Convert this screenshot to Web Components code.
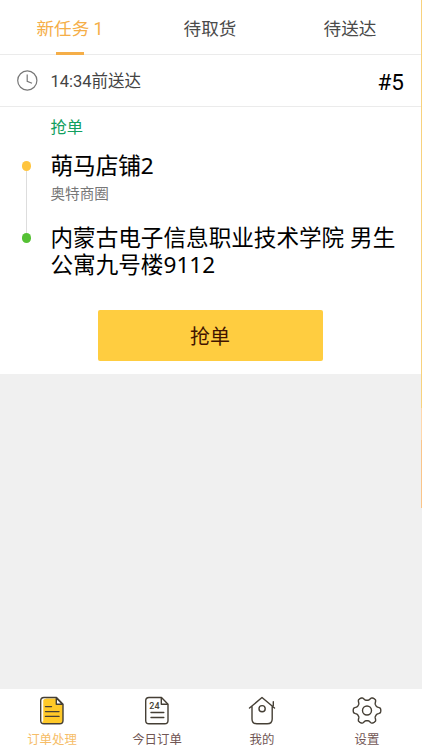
<!DOCTYPE html>
<html lang="zh-CN">
<head>
<meta charset="utf-8">
<title>订单处理</title>
<style>
html,body{margin:0;height:100%}
body{font-family:Roboto,"Noto Sans CJK SC",sans-serif;background:#f0f0f0;overflow:hidden}
</style>
</head>
<body>
<rider-app></rider-app>
<script>
const define=(name,html)=>customElements.define(name,class extends HTMLElement{
  constructor(){
    super();
    const t=document.createElement('template');
    t.innerHTML=html;
    this.attachShadow({mode:'open'}).append(t.content.cloneNode(true));
  }
});

define('task-tab',`<style>
:host{flex:1;display:flex;flex-direction:column;align-items:center;height:55px;color:#4a4a4a;font-size:17.6px;line-height:26px;white-space:pre}
span{padding-top:16px;height:36px}
i{width:28px;height:3px;background:transparent}
:host([active]){color:#f5ae48}
:host([active]) i{background:#f5ae48}
</style><span><slot></slot></span><i></i>`);

define('deadline-row',`<style>
:host{display:flex;align-items:center;height:51px;border-bottom:1px solid #ebebeb;padding:0 18px 0 17px;color:#444;font-size:16.5px}
svg{width:22px;height:22px;margin:0 12.5px 0 -1px}
span{flex:1;line-height:24px;padding-top:2px}
b{font-weight:400;font-size:22.5px;color:#000;padding-top:2px}
</style>
<svg viewBox="0 0 22 22" fill="none" stroke="#777" stroke-width="1.2"><circle cx="11.3" cy="10.5" r="9.6"/><path d="M11.2 4.500v6.8l4.8 2"/></svg>
<span><slot></slot></span><b><slot name="number"></slot></b>`);

define('route-stop',`<style>
:host{display:grid;grid-template-columns:10px 1fr;column-gap:19px}
.rail{display:flex;flex-direction:column;align-items:center;padding-top:9px}
.dot{width:9.5px;height:9.5px;border-radius:50%;background:var(--dot);flex:none}
.line{width:1px;flex:1;background:#ddd;margin-bottom:-9px;display:none}
:host([linked]) .line{display:block}
.name{font-family:"Noto Sans","Noto Sans CJK SC",sans-serif;font-size:22.6px;line-height:27px;color:#000;-webkit-text-stroke:var(--ink,0) #000}
.sub{font-size:14.6px;line-height:20px;color:#777;margin-top:5px}
</style><div class="rail"><div class="dot"></div><div class="line"></div></div>
<div><div class="name"><slot></slot></div><div class="sub"><slot name="area"></slot></div></div>`);

define('grab-button',`<style>
:host{display:block}
button{display:block;width:225px;height:51px;border:0;border-radius:2px;padding:3px 0 0;background:#ffcd40;color:#421400;font:20px/48px Roboto,"Noto Sans CJK SC",sans-serif}
</style><button><slot></slot></button>`);

define('order-card',`<style>
:host{display:block;background:#fff;height:319px}
.body{padding:10px 18px 0 21.5px}
.status{color:#12a060;font-size:16.3px;line-height:22px;padding-left:29px}
.shop{--dot:#ffc53f;--ink:.15px;margin-top:13px;height:72px}
.dest{--dot:#55c134;height:54px}
grab-button{margin:32px 0 0 76px}
</style>
<deadline-row>14:34前送达<span slot="number">#5</span></deadline-row>
<div class="body">
<div class="status">抢单</div>
<route-stop class="shop" linked>萌马店铺2<span slot="area">奥特商圈</span></route-stop>
<route-stop class="dest">内蒙古电子信息职业技术学院 男生公寓九号楼9112</route-stop>
<grab-button>抢单</grab-button>
</div>`);

define('nav-item',`<style>
:host{width:105px;display:flex;flex-direction:column;align-items:center;color:#715654;font-size:12.4px;line-height:18px}
:host([active]){color:#f6bd68}
::slotted(svg){width:32px;height:32px;fill:none;stroke:#453f35;stroke-width:1.4;stroke-linejoin:round;stroke-linecap:round}
div{height:32px;margin:6px 0 4px}
</style><div><slot name="icon"></slot></div><span><slot></slot></span>`);

define('bottom-nav',`<style>
:host{display:flex;height:61px;background:#fff}
nav-item:first-of-type{margin-left:-.5px}
</style>
<nav-item active><svg slot="icon" viewBox="0 0 32 32"><path d="M7.5 3.5H20l7 6.5v16q0 3-3 3H10q-4 0-4-3V6q0-2.500 2-2.500z" fill="#ffc928" stroke="none"/><path d="M6.500 26V5q1-2 3-2" stroke="#fff" stroke-width="1.500"/><path d="M8 2.500H20.500L27 9.200V25.500q0 3.300-3.300 3.300H8q-3.300 0-3.300-3.300V5.800Q4.700 2.500 8 2.500z"/><path d="M20.300 3v6.200H26.500z" fill="#fff"/><path d="M9.500 11.600h6M9.500 16.600H23M9.500 21.400H23"/></svg>订单处理</nav-item>
<nav-item><svg slot="icon" viewBox="0 0 32 32"><path d="M8 2.500H20.500L27 9.200V25.500q0 3.300-3.300 3.300H8q-3.300 0-3.300-3.300V5.800Q4.700 2.500 8 2.500z"/><path d="M20.300 3v6.200H26.500M10 17.500h12.800M10 22.500h12.800"/><text x="8.200" y="14.300" font-family="Roboto" font-weight="500" font-size="9" textLength="10.500" fill="#453f35" stroke="none">24</text></svg>今日订单</nav-item>
<nav-item><svg slot="icon" viewBox="0 0 32 32"><path d="M3.500 13L16 2.500 28.500 13M6 11v13q0 4.800 4.800 4.800h10.400q5 0 5-4.800V11M27.300 6.800v3.800"/><circle cx="16.100" cy="13.700" r="3.100"/></svg>我的</nav-item>
<nav-item><svg slot="icon" viewBox="0 0 32 32"><path id="gear"/><circle cx="16" cy="15.500" r="4.500"/></svg>设置</nav-item>`);

define('rider-app',`<style>
:host{display:flex;flex-direction:column;height:750px;width:422px;position:relative}
.tabs{display:flex;background:linear-gradient(#ebebeb,#ebebeb) 0 54px/100% 1px no-repeat #fff;padding-right:2px;height:55px}
main{flex:1}
.edge{position:absolute;left:421px;top:0;width:1px;height:508px;display:flex;flex-direction:column}
.edge i{background:#f8d27e;height:408px}
.edge i+i{background:#ffd8ac;height:32px}
.edge i+i+i{background:#fac58a;height:68px}
</style>
<div class="tabs"><task-tab active>新任务 1</task-tab><task-tab>待取货</task-tab><task-tab>待送达</task-tab></div>
<main><order-card></order-card></main>
<bottom-nav></bottom-nav>
<div class="edge"><i></i><i></i><i></i></div>`);

/* Six-lobed gear outline: the radius swells towards each tooth. */
const nav=document.querySelector('rider-app').shadowRoot.querySelector('bottom-nav').shadowRoot;
let d='';
for(let a=0;a<360;a+=3){
  const r=a*Math.PI/180, c=Math.cos(6*r), k=12+1.8*Math.tanh(1.8*c)/Math.tanh(1.8);
  d+=(a?'L':'M')+(16+k*Math.cos(r)).toFixed(2)+' '+(15.5+k*Math.sin(r)).toFixed(2);
}
nav.querySelector('#gear').setAttribute('d',d+'z');
</script>
</body>
</html>
